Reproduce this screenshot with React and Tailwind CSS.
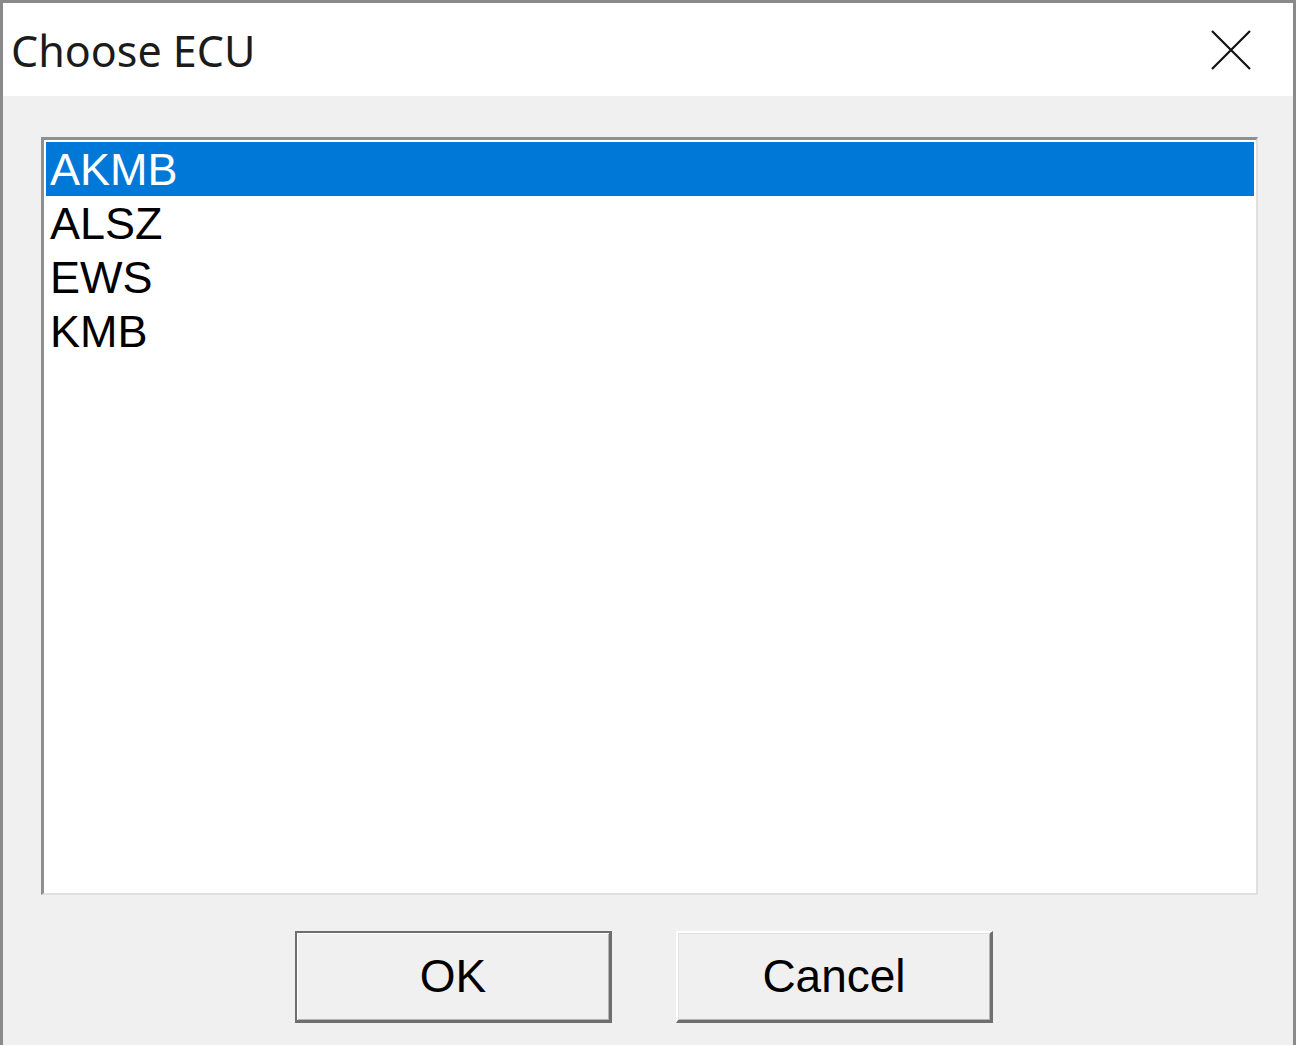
import React from 'react';

// Choose ECU dialog, classic Windows look

const items = ['AKMB', 'ALSZ', 'EWS', 'KMB'];

const WinButton = ({ label, isDefault = false }) => {
  const frame = isDefault
    ? 'border-t-2 border-l-2 border-b-[3px] border-r-[3px] border-[#6e6e6e] shadow-[inset_1px_1px_0_#ffffff,inset_-1px_-1px_0_#b4b4b4]'
    : 'border-t-2 border-l-2 border-b-[3px] border-r-[3px] border-t-white border-l-white border-b-[#6e6e6e] border-r-[#6e6e6e] shadow-[inset_1px_1px_0_#e3e3e3,inset_-1px_-1px_0_#b4b4b4]';

  return (
    <button
      className={`w-[317px] h-[92px] bg-[#f0f0f0] flex items-center justify-center text-[46px] text-black ${frame}`}
      style={{ fontFamily: '"Liberation Sans", Arial, sans-serif' }}
    >
      {label}
    </button>
  );
};

const App = () => {
  return (
    <div className="w-[1296px] h-[1045px] overflow-hidden bg-[#f0f0f0] border-t-[3px] border-l-[3px] border-r-[3px] border-[#8a8a8a] flex flex-col">
      {/* Title bar */}
      <div className="h-[93px] bg-white flex items-center justify-between pl-[8px] pr-[42px] shrink-0">
        <span
          className="text-[43px] text-[#1b1b1b] leading-none mt-[1px]"
          style={{ fontFamily: '"Noto Sans", "Open Sans", sans-serif' }}
        >
          Choose ECU
        </span>
        <svg width="40" height="40" viewBox="0 0 40 40">
          <path d="M1 1 L39 39 M39 1 L1 39" stroke="#111" strokeWidth="2.2" fill="none" />
        </svg>
      </div>

      {/* Body */}
      <div className="flex-1 pt-[41px] pl-[38px] pr-[35px]">
        <div className="h-[758px] bg-white border-t-[3px] border-l-[3px] border-t-[#8f8f8f] border-l-[#8f8f8f] border-b-2 border-r-2 border-b-[#e0e0e0] border-r-[#e0e0e0] p-[2px]">
          {items.map((item, index) => (
            <div
              key={item}
              className={`h-[54px] pl-[4px] flex items-center text-[45px] leading-none ${
                index === 0 ? 'bg-[#0078d7] text-white' : 'text-black'
              }`}
              style={{ fontFamily: '"Liberation Sans", Arial, sans-serif' }}
            >
              {item}
            </div>
          ))}
        </div>

        <div className="flex gap-[64px] pl-[254px] mt-[36px]">
          <WinButton label="OK" isDefault />
          <WinButton label="Cancel" />
        </div>
      </div>
    </div>
  );
};

export default App;
